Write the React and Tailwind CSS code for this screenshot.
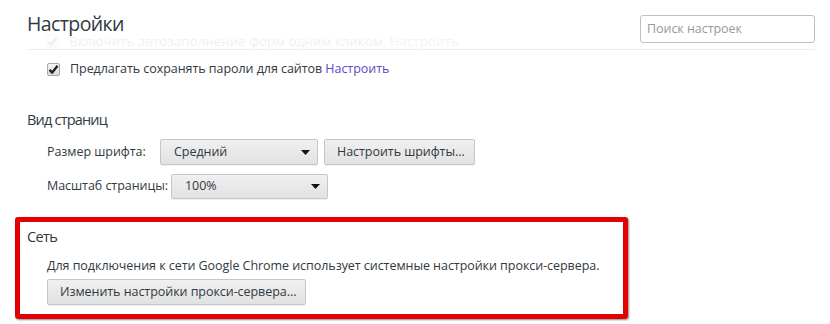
import { useState } from 'react';

function CheckBox() {
  return (
    <span className="inline-flex items-center justify-center w-[13px] h-[13px] shrink-0 rounded-[2px] border border-[#a8a8a8] bg-gradient-to-b from-[#f4f4f4] to-[#dcdcdc]">
      <svg width="11" height="11" viewBox="0 0 11 11">
        <path d="M1.5 5.8 L4.2 8.6 L9.6 1.8" fill="none" stroke="#222" strokeWidth="2.4" strokeLinejoin="round" />
      </svg>
    </span>
  );
}

function Select({ value, width }) {
  return (
    <div
      className={`flex items-center justify-between h-full pl-[13px] pr-[7px] ${width} rounded-[2px] border border-[#c6c6c6] bg-gradient-to-b from-[#f0f0f0] to-[#e2e2e2] shadow-[0_1px_0_rgba(0,0,0,0.06)]`}
    >
      <span>{value}</span>
      <svg width="9" height="5" viewBox="0 0 9 5">
        <path d="M0 0 H9 L4.5 5 Z" fill="#111" />
      </svg>
    </div>
  );
}

function Button({ children, className = '' }) {
  return (
    <button
      className={`h-[26px] pl-[12px] pr-[9px] rounded-[2px] border border-[#c6c6c6] bg-gradient-to-b from-[#f0f0f0] to-[#e2e2e2] text-[#303942] whitespace-nowrap shadow-[0_1px_0_rgba(0,0,0,0.06)] ${className}`}
    >
      {children}
    </button>
  );
}

export default function App() {
  const [savePasswords, setSavePasswords] = useState(true);

  return (
    <div className="w-[830px] h-[324px] overflow-hidden bg-white text-[#303942] text-[12.5px] tracking-[-0.05px] font-['Open_Sans',sans-serif]">
      <div className="relative ml-[27px] mr-[15px] h-[50px] border-b border-[#eeeeee] flex justify-between items-start">
        <span className="absolute left-[19px] top-[31px] flex items-center gap-[10px] opacity-[0.07] whitespace-nowrap text-[13.5px]">
          <CheckBox />
          <span>
            Включить автозаполнение форм одним кликом. <span className="text-[#5b4bc4]">Настроить</span>
          </span>
        </span>
        <h1 className="relative mt-[10px] text-[19.5px] leading-[28px] tracking-[-0.6px]">Настройки</h1>
        <div className="mt-[15px] w-[175px] h-[28px] rounded-[3px] border border-[#bfbfbf] px-[6px] flex items-center text-[#999]">
          Поиск настроек
        </div>
      </div>

      <label
        className="flex items-center gap-[10px] ml-[47px] mt-[12px] h-[14px] whitespace-nowrap"
        onClick={() => setSavePasswords(!savePasswords)}
      >
        <CheckBox />
        <span>
          Предлагать сохранять пароли для сайтов <span className="text-[#5b4bc4]">Настроить</span>
        </span>
      </label>

      <div className="ml-[27px] mt-[34px]">
        <h2 className="text-[14.5px] leading-[20px] tracking-[-0.8px]">Вид страниц</h2>
        <div className="ml-[20px] mt-[9px] flex items-center h-[26px] whitespace-nowrap">
          <span className="w-[113px]">Размер шрифта:</span>
          <Select value="Средний" width="w-[158px]" />
          <Button className="ml-[6px]">Настроить шрифты...</Button>
        </div>
        <div className="ml-[20px] mt-[9px] flex items-center h-[25px] whitespace-nowrap">
          <span className="w-[124px]">Масштаб страницы:</span>
          <Select value="100%" width="w-[157px]" />
        </div>
      </div>

      <div className="ml-[15px] mt-[18px] w-[613px] h-[102px] border-[5px] border-[#e30000] rounded-[3px] shadow-[1px_1px_2px_rgba(0,0,0,0.45)] px-[7px]">
        <h2 className="mt-[5px] text-[14.5px] leading-[20px] tracking-[-0.6px]">Сеть</h2>
        <p className="ml-[20px] mt-[10px] leading-[18px] whitespace-nowrap">
          Для подключения к сети Google Chrome использует системные настройки прокси-сервера.
        </p>
        <Button className="ml-[20px] mt-[4px]">Изменить настройки прокси-сервера...</Button>
      </div>
    </div>
  );
}
